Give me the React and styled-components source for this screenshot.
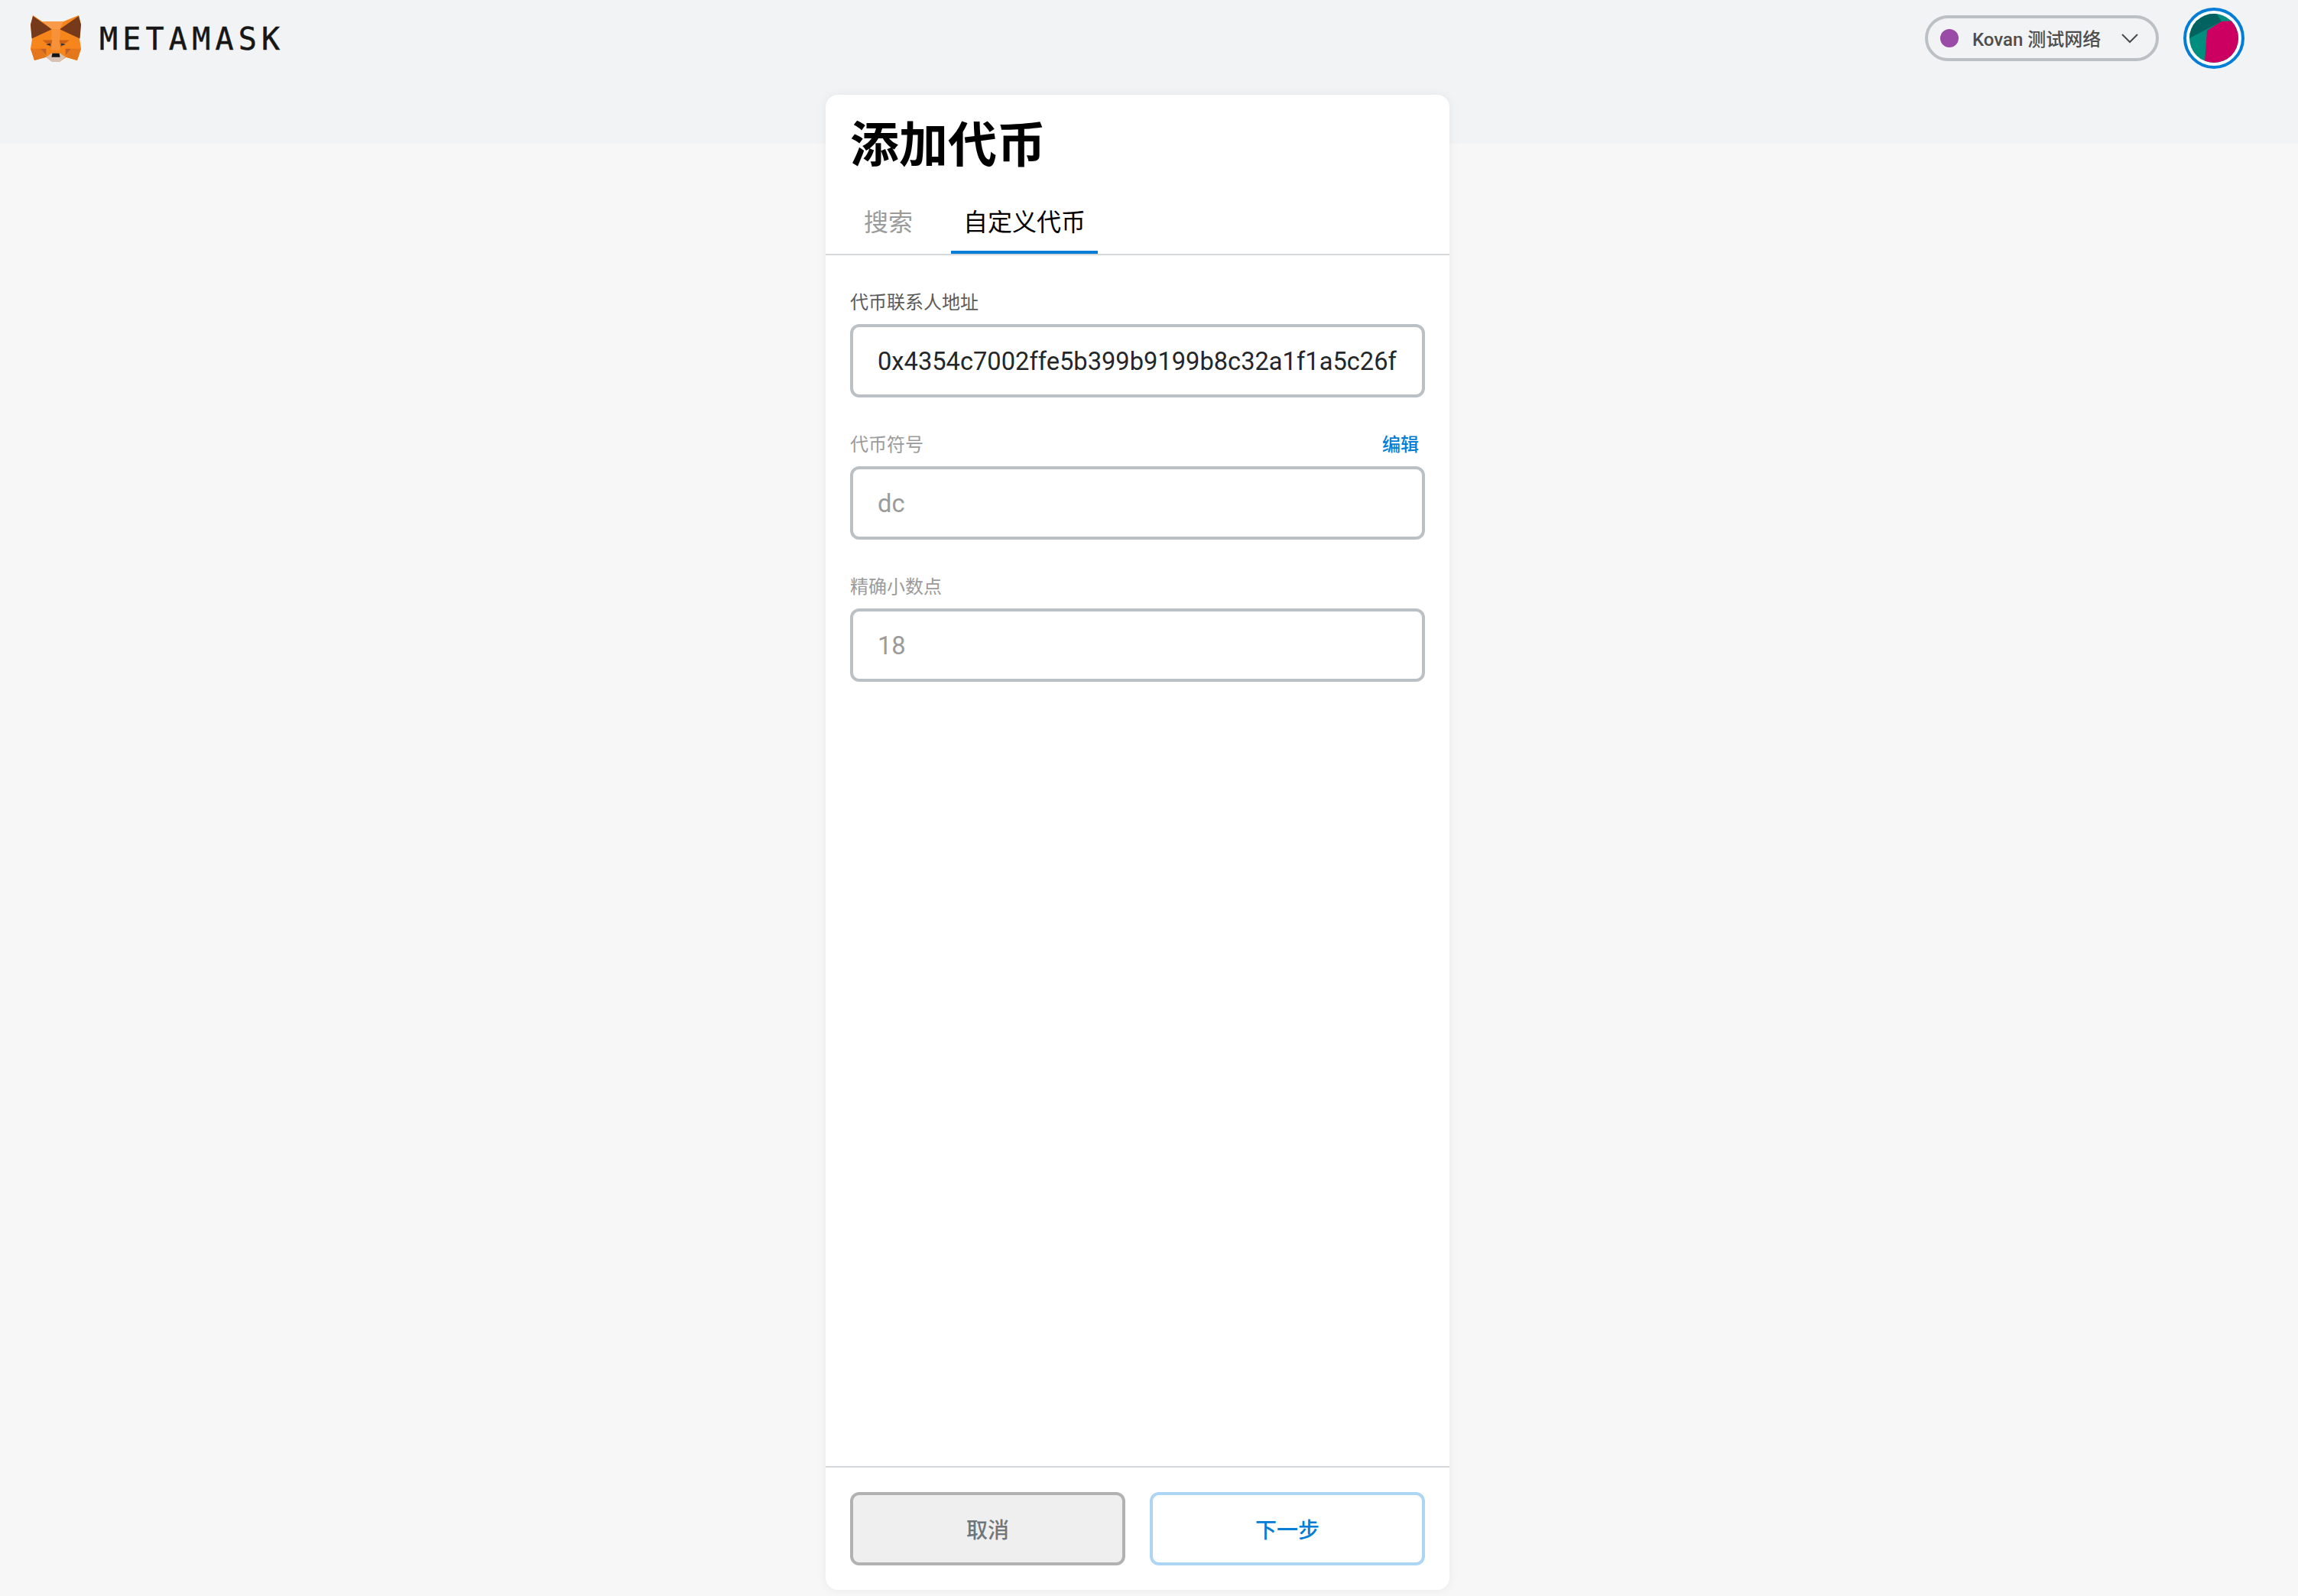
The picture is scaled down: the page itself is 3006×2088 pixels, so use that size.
import React from 'react';
import styled, { createGlobalStyle } from 'styled-components';

const Global = createGlobalStyle`
  html, body { margin: 0; padding: 0; background: #f7f7f7; }
  body { font-family: Roboto, "Noto Sans CJK SC", sans-serif; }
`;
const Page = styled.div`
  width: 3006px; height: 2088px; position: relative; overflow: hidden; background: #f7f7f7;
`;
const Band = styled.header`
  height: 188px; background: #f2f3f4; display: flex; align-items: flex-start; justify-content: space-between;
  padding: 0 70px 0 40px; box-sizing: border-box;
`;
const Brand = styled.div`
  display: flex; align-items: center; gap: 24px; height: 100px;
`;
const Wordmark = styled.span`
  font-family: "DejaVu Sans Mono", "Liberation Mono", monospace; font-size: 40px; letter-spacing: 6.2px; color: #161616; line-height: 1;
  transform: translateY(1px); font-weight: 400; -webkit-text-stroke: 0.5px #161616;
`;
const HeaderRight = styled.div`
  display: flex; align-items: flex-start; gap: 32px; padding-top: 10px;
`;
const NetworkPill = styled.div`
  margin-top: 10px; width: 306px; height: 60px; box-sizing: border-box; border: 4px solid #bbc0c5; border-radius: 30px;
  display: flex; align-items: center; padding-left: 16px; color: #4d4d4d;
`;
const Dot = styled.span`
  width: 24px; height: 24px; border-radius: 50%; background: #9a4ba8; flex: none;
`;
const NetName = styled.span`
  margin-left: 18px; font-size: 24px; font-weight: 500; white-space: nowrap; line-height: 1; color: #4d4d4d;
  transform: translateY(2px);
`;
const Chevron = styled.svg`
  margin-left: 27px; flex: none;
`;
const AvatarRing = styled.div`
  width: 80px; height: 80px; box-sizing: border-box; border: 4px solid #037dd6; border-radius: 50%; padding: 4px; background: #fff;
`;
const Avatar = styled.svg`
  display: block; width: 64px; height: 64px; border-radius: 50%;
`;
const Card = styled.main`
  position: absolute; left: 1080px; top: 124px; width: 816px; height: 1956px; background: #fff; border-radius: 16px;
  box-shadow: 0 0 14px rgba(0,0,0,.06); display: flex; flex-direction: column;
`;
const Title = styled.h1`
  margin: 0; padding: 12px 32px 0; font-size: 64px; line-height: 96px; font-weight: 700; color: #000;
  font-family: "Noto Sans CJK SC", sans-serif; height: 86px; box-sizing: content-box;
`;
const Tabs = styled.div`
  margin-top: 32px; display: flex; padding-left: 34px; border-bottom: 2px solid #d6d9dc; height: 80px; box-sizing: border-box;
`;
const Tab = styled.div`
  box-sizing: border-box; height: 78px; padding: 0 16px; margin-right: ${p => p.$gap}px; font-size: 32px; line-height: 68px; white-space: nowrap;
  color: ${p => p.$active ? '#000' : '#9b9b9b'};
  border-bottom: ${p => p.$active ? '4px solid #037dd6' : '0'};
  font-family: "Noto Sans CJK SC", sans-serif;
`;
const Form = styled.section`
  flex: 1; padding: 44px 32px 0; display: flex; flex-direction: column; gap: 44px;
`;
const Field = styled.div`
  display: flex; flex-direction: column; gap: 14px;
`;
const LabelRow = styled.div`
  display: flex; justify-content: space-between; height: 32px; align-items: center; padding-right: 8px;
`;
const Label = styled.label`
  font-size: 24px; line-height: 32px; color: ${p => p.$muted ? '#9b9b9b' : '#5b5b5b'}; font-family: "Noto Sans CJK SC", sans-serif;
`;
const Edit = styled.span`
  font-size: 24px; line-height: 32px; color: #037dd6; font-family: "Noto Sans CJK SC", sans-serif; font-weight: 500;
`;
const Input = styled.div`
  box-sizing: border-box; width: 752px; height: 96px; border: 4px solid #bbc0c5; border-radius: 12px;
  padding: 2px 32px 0; display: flex; align-items: center; font-size: 32.65px; font-family: Roboto, sans-serif; white-space: nowrap; overflow: hidden;
  color: ${p => p.$muted ? '#9b9b9b' : '#24272a'};
`;
const Footer = styled.footer`
  border-top: 2px solid #d6d9dc; height: 162px; box-sizing: border-box; padding: 32px 32px 0; display: flex; gap: 32px;
`;
const Button = styled.button`
  flex: 1; height: 96px; box-sizing: border-box; border-radius: 12px; font-size: 28px; font-weight: 500; font-family: "Noto Sans CJK SC", sans-serif;
  border: 4px solid ${p => p.$primary ? '#acd6f4' : '#b2b2b2'};
  background: ${p => p.$primary ? '#fff' : '#efefef'};
  color: ${p => p.$primary ? '#037dd6' : '#6f767c'};
  padding: 0;
`;
const FoxMark = styled.svg`
  flex: none; display: block;
`;

const Fox = () => (
  <FoxMark width="66" height="61" viewBox="0 0 65 60">
    <polygon points="3,0 15,8 42,8 62,0 65,12 63,30 65,43 60,58 46,54 37,60 28,60 20,54 5,58 0,43 2,30 0,12" fill="#f6851b" />
    <polygon points="3,1 0,12 1.5,30 27.5,18" fill="#763a1a" />
    <polygon points="62,1 65,12 63.5,30 37.5,18" fill="#763a1a" />
    <polygon points="15,8 42,8 38,18 27,18" fill="#f89a4a" />
    <polygon points="27,18 38,18 38,45 27,45" fill="#f8923a" />
    <polygon points="0,43 13,43 20,54 5,58" fill="#e4761b" />
    <polygon points="65,43 52,43 45,54 60,58" fill="#e4761b" />
    <polygon points="13,43 20,43 20,52" fill="#c0612a" />
    <polygon points="52,43 45,43 45,52" fill="#c0612a" />
    <polygon points="15,32 28,32 26,41 20,36" fill="#cd6116" />
    <polygon points="50,32 37,32 39,41 45,36" fill="#cd6116" />
    <polygon points="20,54 27,49 38,49 45,54 37,60 28,60" fill="#d7c1b3" />
    <polygon points="28,49 37,49 38,54 27,54" fill="#161616" />
    <polygon points="20,38 25,36 26,39" fill="#233447" />
    <polygon points="45,38 40,36 39,39" fill="#233447" />
  </FoxMark>
);

export default function App() {
  return (
    <Page>
      <Global />
      <Band>
        <Brand>
          <Fox />
          <Wordmark>METAMASK</Wordmark>
        </Brand>
        <HeaderRight>
          <NetworkPill>
            <Dot />
            <NetName>Kovan 测试网络</NetName>
            <Chevron width="22" height="14" viewBox="0 0 22 14"><path d="M1 2 L11 12 L21 2" fill="none" stroke="#4d4d4d" strokeWidth="2" /></Chevron>
          </NetworkPill>
          <AvatarRing>
            <Avatar viewBox="0 0 64 64">
              <rect width="64" height="64" fill="#018e7e" />
              <polygon points="20,64 23,22 42,10 64,9 64,64" fill="#cc0060" />
              <polygon points="0,32 42,10 36,0 0,0" fill="#01625f" />
            </Avatar>
          </AvatarRing>
        </HeaderRight>
      </Band>
      <Card>
        <Title>添加代币</Title>
        <Tabs>
          <Tab $gap={34}>搜索</Tab>
          <Tab $active $gap={0}>自定义代币</Tab>
        </Tabs>
        <Form>
          <Field>
            <LabelRow><Label>代币联系人地址</Label></LabelRow>
            <Input>0x4354c7002ffe5b399b9199b8c32a1f1a5c26f</Input>
          </Field>
          <Field>
            <LabelRow><Label $muted>代币符号</Label><Edit>编辑</Edit></LabelRow>
            <Input $muted>dc</Input>
          </Field>
          <Field>
            <LabelRow><Label $muted>精确小数点</Label></LabelRow>
            <Input $muted>18</Input>
          </Field>
        </Form>
        <Footer>
          <Button>取消</Button>
          <Button $primary>下一步</Button>
        </Footer>
      </Card>
    </Page>
  );
}
